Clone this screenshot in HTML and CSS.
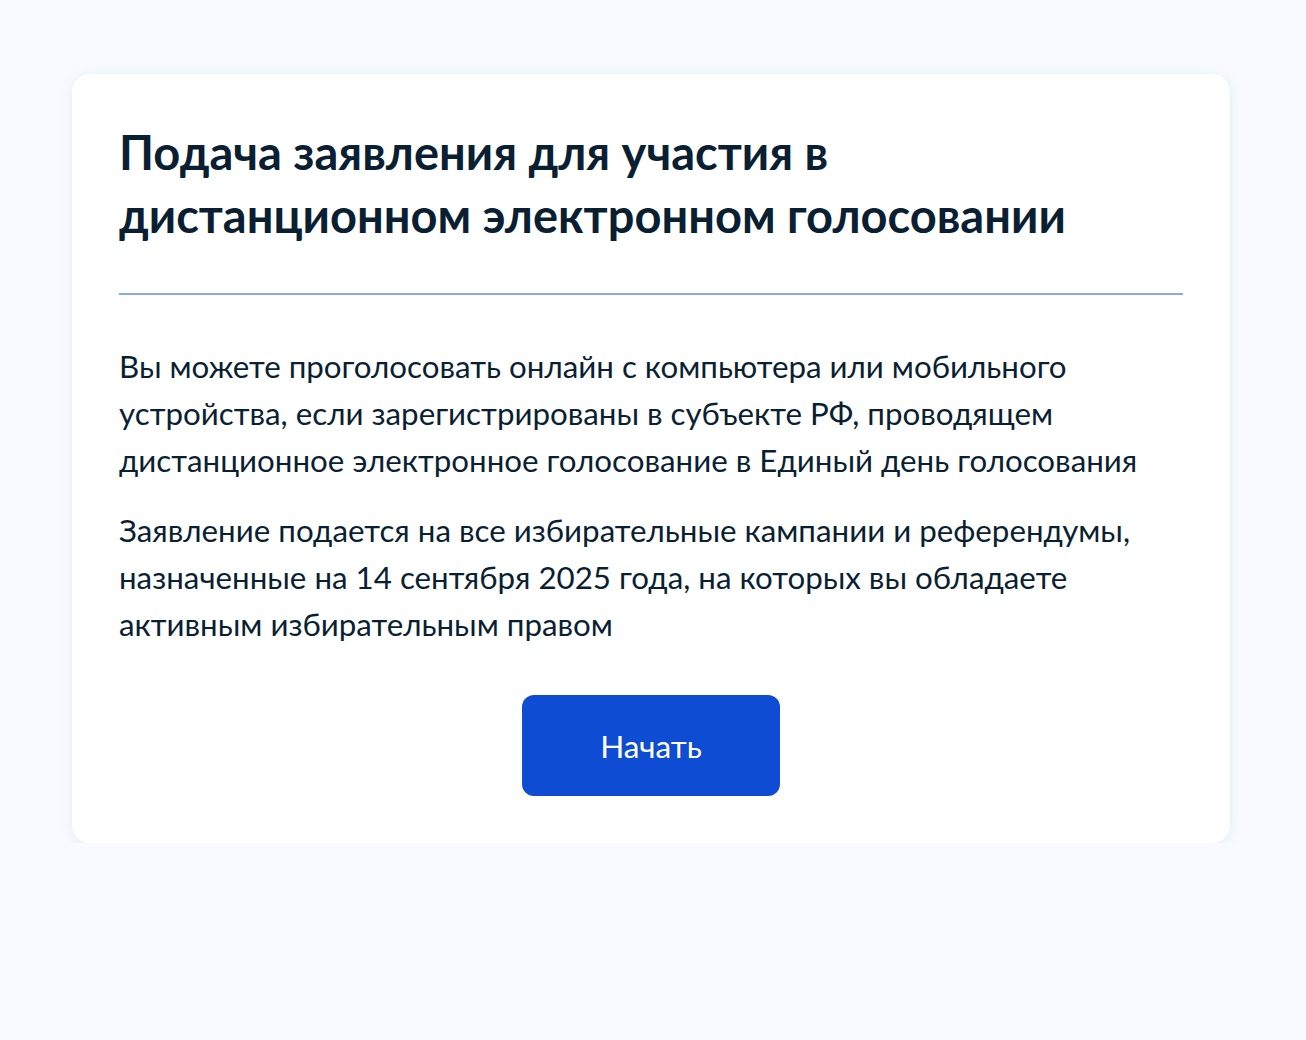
FILE: index.html
```html
<!DOCTYPE html>
<html lang="ru">
<head>
    <meta charset="UTF-8">
    <meta name="viewport" content="width=device-width, initial-scale=1.0">
    <title>Подача заявления</title>
    <link rel="stylesheet" href="styles.css">
</head>
<body>

    <div class="card">
        <h1 class="card-title">Подача заявления для участия в<br>дистанционном электронном голосовании</h1>
        <hr class="divider">
        <p class="text">Вы можете проголосовать онлайн с компьютера или мобильного устройства, если зарегистрированы в субъекте РФ, проводящем дистанционное электронное голосование в Единый день голосования</p>
        <p class="text">Заявление подается на все избирательные кампании и референдумы, назначенные на 14 сентября 2025 года, на которых вы обладаете активным избирательным правом</p>
        <div class="actions">
            <button class="start-btn">Начать</button>
        </div>
    </div>

</body>
</html>
```

FILE: styles.css
```css
body {
    margin: 0;
    background-color: #f8faff;
    font-family: Lato, "Noto Sans", sans-serif;
    color: #0b1f33;
}
.card {
    margin: 74px 76px 0 72px;
    background: white;
    border-radius: 18px;
    padding: 47px 47px 47px 47px;
    box-shadow: 0 2px 12px rgba(102, 136, 204, 0.14);
}
.card-title {
    margin: 0;
    font-size: 47px;
    line-height: 63px;
    font-weight: 700;
}
.divider {
    margin: 46px 0 48px;
    border: none;
    height: 2px;
    background-color: #8ba8ef;
}
.text {
    margin: 0 0 23px;
    font-size: 31.3px;
    line-height: 47px;
}
.text:last-of-type {
    margin-bottom: 0;
}
.actions {
    display: flex;
    justify-content: center;
    margin-top: 47px;
}
.start-btn {
    width: 258px;
    height: 101px;
    background-color: #0d4cd3;
    color: white;
    border: none;
    border-radius: 12px;
    font-family: inherit;
    font-size: 31.5px;
    cursor: pointer;
}
```
